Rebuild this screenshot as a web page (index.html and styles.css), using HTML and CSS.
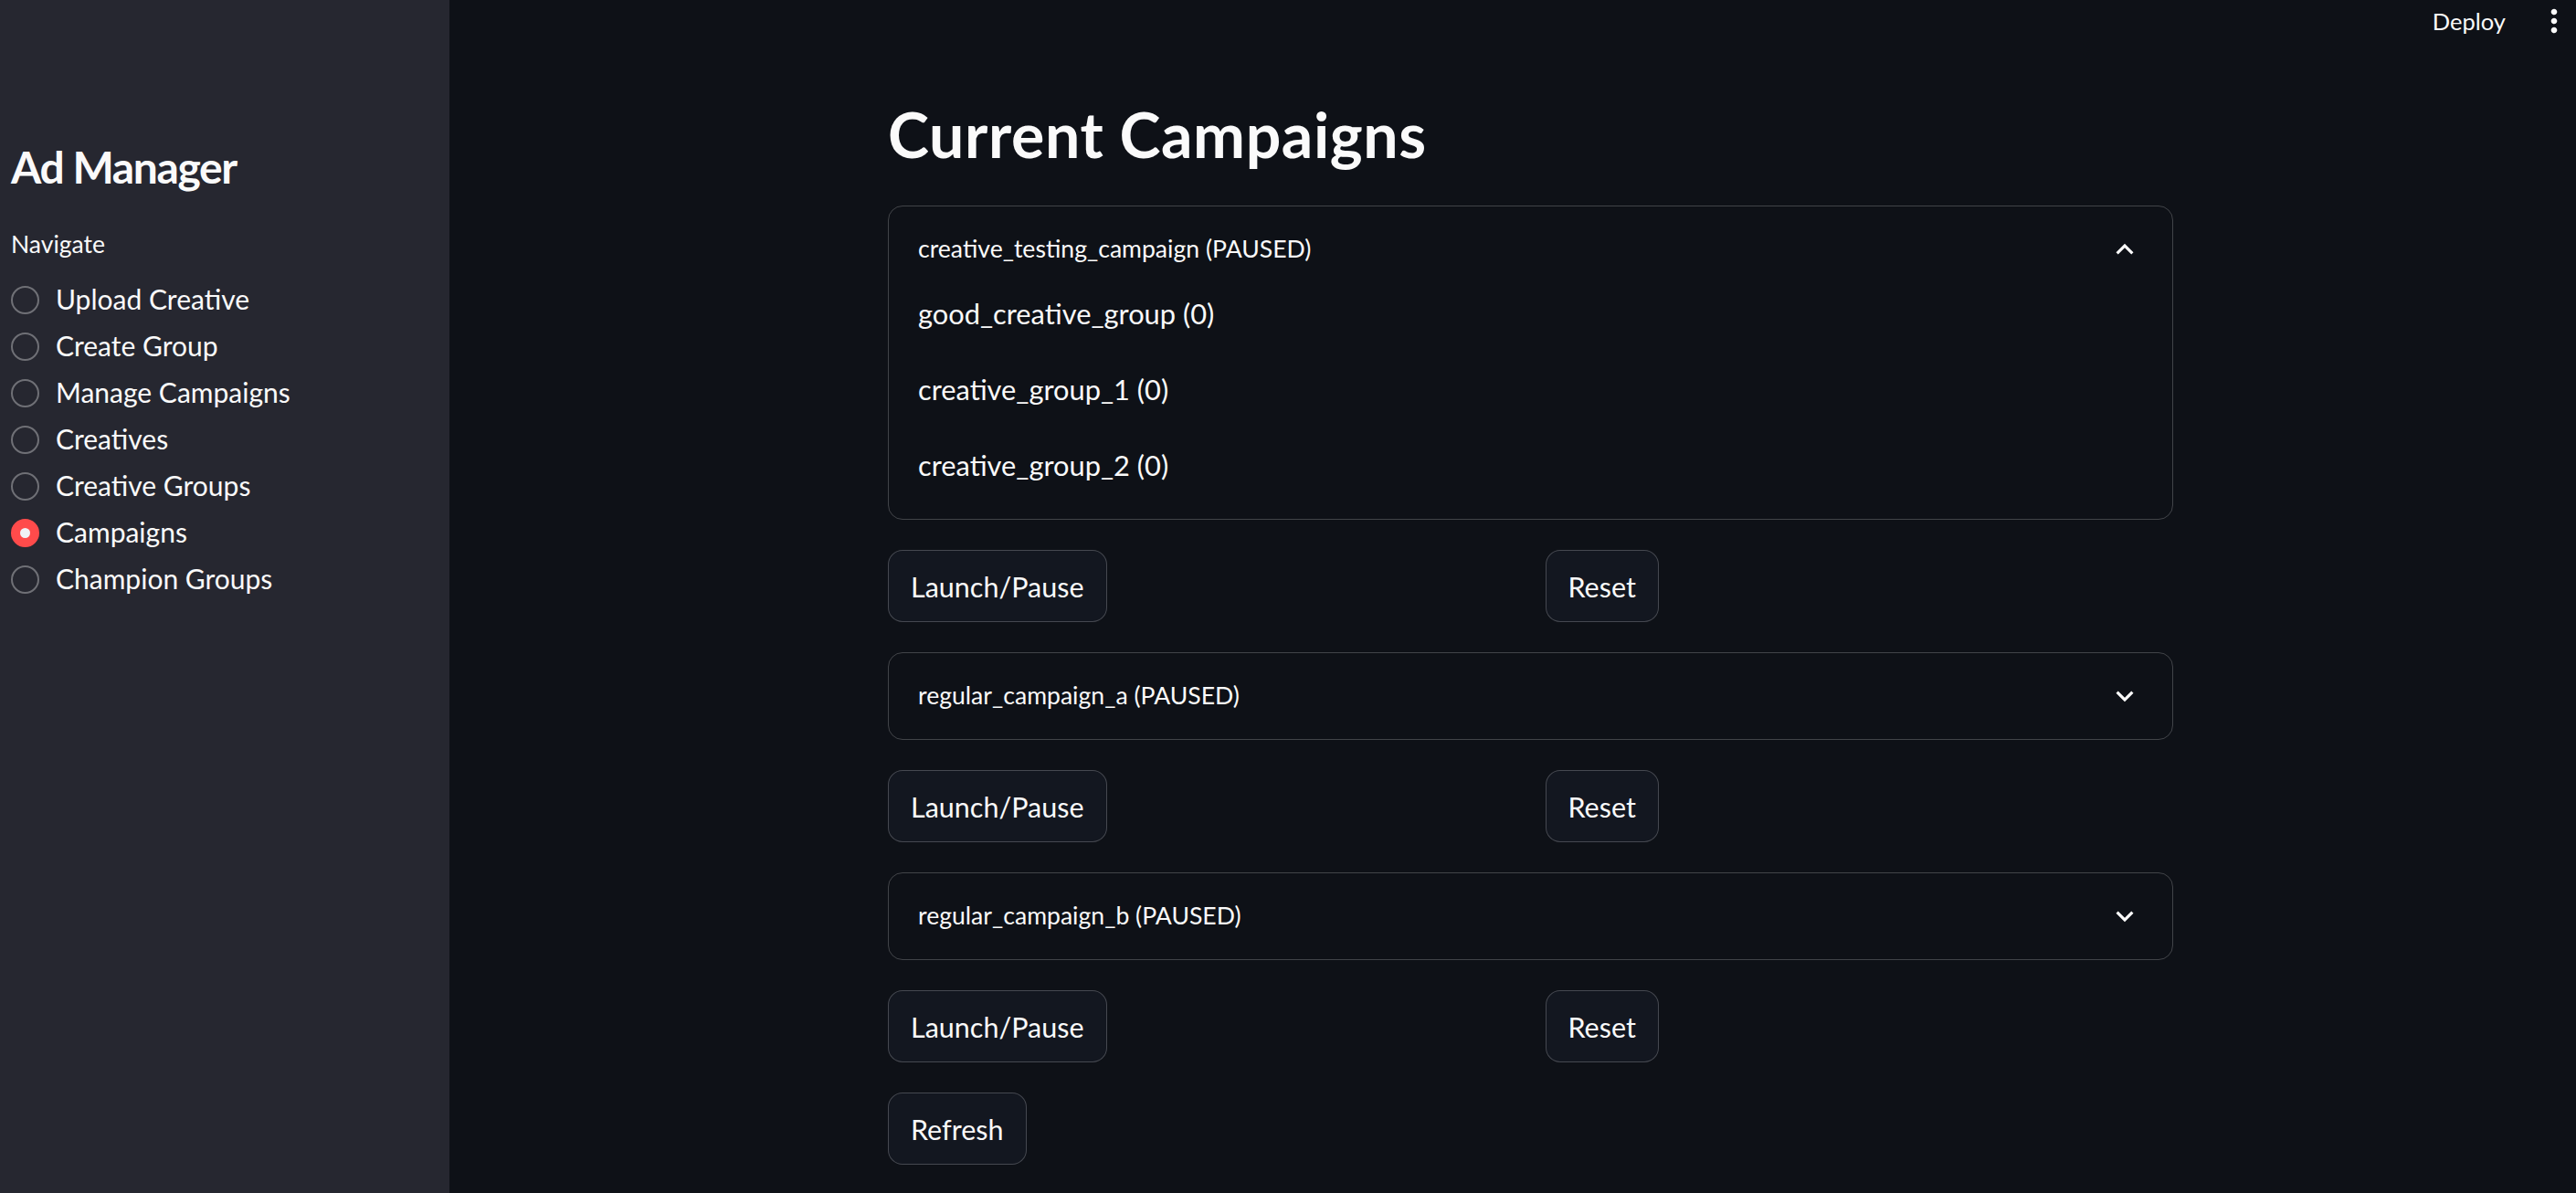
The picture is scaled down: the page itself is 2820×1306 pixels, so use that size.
FILE: index.html
```html
<!DOCTYPE html>
<html>
<head>
<meta charset="utf-8">
<title>Ad Manager</title>
<link rel="stylesheet" href="styles.css">
</head>
<body>
<div class="app">
  <aside class="sidebar">
    <h1 class="side-title">Ad Manager</h1>
    <div class="nav-label">Navigate</div>
    <div class="radio-list">
      <div class="radio"><span class="dot"></span><span class="radio-text">Upload Creative</span></div>
      <div class="radio"><span class="dot"></span><span class="radio-text">Create Group</span></div>
      <div class="radio"><span class="dot"></span><span class="radio-text">Manage Campaigns</span></div>
      <div class="radio"><span class="dot"></span><span class="radio-text">Creatives</span></div>
      <div class="radio"><span class="dot"></span><span class="radio-text">Creative Groups</span></div>
      <div class="radio selected"><span class="dot"></span><span class="radio-text">Campaigns</span></div>
      <div class="radio"><span class="dot"></span><span class="radio-text">Champion Groups</span></div>
    </div>
  </aside>
  <main class="main">
    <header class="topbar">
      <span class="deploy">Deploy</span>
      <svg class="kebab" viewBox="0 0 24 24"><path fill="#fafafa" d="M12 8c1.1 0 2-.9 2-2s-.9-2-2-2-2 .9-2 2 .9 2 2 2zm0 2c-1.1 0-2 .9-2 2s.9 2 2 2 2-.9 2-2-.9-2-2-2zm0 6c-1.1 0-2 .9-2 2s.9 2 2 2 2-.9 2-2-.9-2-2-2z"/></svg>
    </header>
    <div class="content">
      <div class="block">
        <h1 class="title">Current Campaigns</h1>
        <div class="stack">
          <div class="expander">
            <div class="exp-head">
              <span>creative_testing_campaign (PAUSED)</span>
              <svg class="chev" viewBox="0 0 24 24"><path fill="#fafafa" d="M7.41 15.41L12 10.83l4.59 4.58L18 14l-6-6-6 6z"/></svg>
            </div>
            <div class="exp-body">
              <p>good_creative_group (0)</p>
              <p>creative_group_1 (0)</p>
              <p>creative_group_2 (0)</p>
            </div>
          </div>
          <div class="btn-row">
            <div class="col"><button class="btn">Launch/Pause</button></div>
            <div class="col"><button class="btn">Reset</button></div>
          </div>
          <div class="expander">
            <div class="exp-head">
              <span>regular_campaign_a (PAUSED)</span>
              <svg class="chev" viewBox="0 0 24 24"><path fill="#fafafa" d="M16.59 8.59L12 13.17 7.41 8.59 6 10l6 6 6-6z"/></svg>
            </div>
          </div>
          <div class="btn-row">
            <div class="col"><button class="btn">Launch/Pause</button></div>
            <div class="col"><button class="btn">Reset</button></div>
          </div>
          <div class="expander">
            <div class="exp-head">
              <span>regular_campaign_b (PAUSED)</span>
              <svg class="chev" viewBox="0 0 24 24"><path fill="#fafafa" d="M16.59 8.59L12 13.17 7.41 8.59 6 10l6 6 6-6z"/></svg>
            </div>
          </div>
          <div class="btn-row">
            <div class="col"><button class="btn">Launch/Pause</button></div>
            <div class="col"><button class="btn">Reset</button></div>
          </div>
          <div class="single"><button class="btn">Refresh</button></div>
        </div>
      </div>
    </div>
  </main>
</div>
</body>
</html>
```

FILE: styles.css
```css
* { box-sizing: border-box; }
html, body {
  margin: 0;
  padding: 0;
  height: 100%;
  background: #0e1117;
  color: #fafafa;
  font-family: "Source Sans Pro", Lato, "Noto Sans", sans-serif;
  overflow: hidden;
}
.app {
  display: flex;
  height: 100vh;
}
.sidebar {
  width: 492px;
  flex: 0 0 492px;
  background: #262730;
  padding: 153px 12px 0 12px;
}
.side-title {
  margin: 0;
  font-size: 48px;
  line-height: 60px;
  font-weight: 700;
  letter-spacing: -1.4px;
}
.nav-label {
  margin-top: 37px;
  font-size: 26.5px;
  line-height: 34px;
}
.radio-list {
  margin-top: 19px;
  display: flex;
  flex-direction: column;
}
.radio {
  display: flex;
  align-items: center;
  height: 51px;
  gap: 18px;
  font-size: 30px;
}
.radio-text {
  padding-bottom: 3px;
}
.dot {
  width: 31px;
  height: 31px;
  border-radius: 50%;
  border: 2px solid rgba(250, 250, 250, 0.35);
  flex: 0 0 31px;
  display: flex;
  align-items: center;
  justify-content: center;
}
.radio.selected .dot {
  background: #ff4b4b;
  border-color: #ff4b4b;
}
.radio.selected .dot::after {
  content: "";
  width: 11px;
  height: 11px;
  border-radius: 50%;
  background: #f0f2f6;
}
.main {
  flex: 1;
  display: flex;
  flex-direction: column;
}
.topbar {
  height: 46px;
  display: flex;
  justify-content: flex-end;
  align-items: center;
  padding-right: 4px;
  gap: 33px;
}
.deploy {
  font-size: 25.5px;
}
.kebab {
  width: 40px;
  height: 40px;
}
.content {
  display: flex;
  justify-content: center;
  padding-left: 39px;
}
.block {
  width: 1407px;
  padding-top: 60px;
}
.title {
  margin: 0 0 37px 0;
  font-size: 68px;
  line-height: 82px;
  font-weight: 700;
  letter-spacing: 0.6px;
}
.stack {
  display: flex;
  flex-direction: column;
  gap: 33px;
}
.expander {
  border: 1px solid rgba(250, 250, 250, 0.22);
  border-radius: 16px;
}
.exp-head {
  height: 94px;
  display: flex;
  align-items: center;
  justify-content: space-between;
  padding: 0 33px 0 32px;
  font-size: 26.6px;
}
.exp-head span {
  padding-bottom: 3px;
}
.chev {
  width: 38px;
  height: 38px;
}
.exp-body {
  padding: 0 32px 31px 32px;
  display: flex;
  flex-direction: column;
  gap: 32px;
}
.exp-body p {
  margin: 0;
  font-size: 30.8px;
  line-height: 47px;
  padding-bottom: 4px;
}
.btn-row {
  display: flex;
  gap: 32px;
}
.col {
  flex: 1;
}
.btn {
  height: 79px;
  padding: 0 24px;
  background: #131720;
  color: #fafafa;
  border: 1px solid rgba(250, 250, 250, 0.22);
  border-radius: 16px;
  font-family: inherit;
  font-size: 30.5px;
}
```
